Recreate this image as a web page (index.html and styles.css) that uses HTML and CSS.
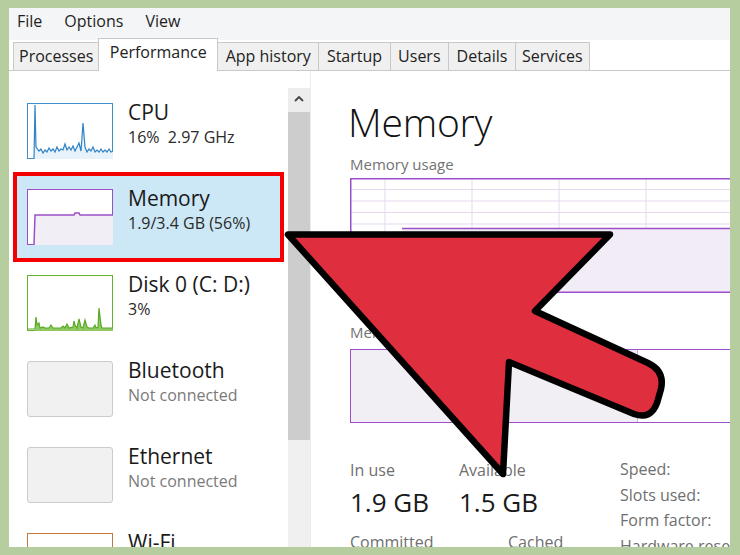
FILE: index.html
```html
<!DOCTYPE html>
<html>
<head>
<meta charset="utf-8">
<link rel="stylesheet" href="styles.css">
</head>
<body>
<div class="frame">
  <div class="menubar">
    <span class="menu-item">File</span>
    <span class="menu-item">Options</span>
    <span class="menu-item">View</span>
  </div>
  <div class="tabs">
    <div class="tab">Processes</div>
    <div class="tab active">Performance</div>
    <div class="tab">App history</div>
    <div class="tab">Startup</div>
    <div class="tab">Users</div>
    <div class="tab">Details</div>
    <div class="tab">Services</div>
  </div>
  <div class="main">
    <div class="sidebar">
      <div class="item">
        <div class="thumb thumb-cpu">
          <svg viewBox="0 0 86 56" width="86" height="56">
            <polygon class="fill-cpu" points="0,56 7,56 8,2 9,44 12,48 14,46 16,50 18,47 20,49 22,45 24,48 26,46 28,49 30,44 32,48 34,46 36,47 38,41 40,47 42,44 44,47 46,43 48,48 50,44 52,40 54,48 56,20 58,44 60,49 62,46 64,48 66,44 68,49 70,47 72,49 74,46 76,49 78,47 80,49 82,46 84,49 86,48 86,56"/>
            <polyline class="line-cpu" points="7,56 8,2 9,44 12,48 14,46 16,50 18,47 20,49 22,45 24,48 26,46 28,49 30,44 32,48 34,46 36,47 38,41 40,47 42,44 44,47 46,43 48,48 50,44 52,40 54,48 56,20 58,44 60,49 62,46 64,48 66,44 68,49 70,47 72,49 74,46 76,49 78,47 80,49 82,46 84,49 86,48"/>
          </svg>
        </div>
        <div class="info">
          <div class="name">CPU</div>
          <div class="sub">16%&nbsp; 2.97 GHz</div>
        </div>
      </div>
      <div class="item selected">
        <div class="thumb thumb-mem">
          <svg viewBox="0 0 86 56" width="86" height="56">
            <polygon class="fill-mem" points="7,56 8,26 47,26 48,24 52,24 53,26 86,26 86,56"/>
            <polyline class="line-mem" points="7,56 8,26 47,26 48,24 52,24 53,26 86,26"/>
          </svg>
        </div>
        <div class="info">
          <div class="name">Memory</div>
          <div class="sub">1.9/3.4 GB (56%)</div>
        </div>
      </div>
      <div class="item">
        <div class="thumb thumb-disk">
          <svg viewBox="0 0 86 56" width="86" height="56">
            <polygon class="fill-disk" points="0,56 8,56 9,42 10,50 12,48 13,53 16,52 18,53 22,53 24,50 26,53 34,53 36,51 38,53 40,49 42,53 46,52 47,46 48,50 50,53 52,44 54,52 56,53 58,45 60,52 62,53 66,53 68,50 69,53 71,52 72,33 74,50 75,53 86,53 86,56"/>
            <polyline class="line-disk" points="0,54 8,54 9,42 10,50 12,48 13,53 16,52 18,53 22,53 24,50 26,53 34,53 36,51 38,53 40,49 42,53 46,52 47,46 48,50 50,53 52,44 54,52 56,53 58,45 60,52 62,53 66,53 68,50 69,53 71,52 72,33 74,50 75,53 86,53"/>
          </svg>
        </div>
        <div class="info">
          <div class="name">Disk 0 (C: D:)</div>
          <div class="sub">3%</div>
        </div>
      </div>
      <div class="item">
        <div class="thumb thumb-off"></div>
        <div class="info">
          <div class="name">Bluetooth</div>
          <div class="sub muted">Not connected</div>
        </div>
      </div>
      <div class="item">
        <div class="thumb thumb-off"></div>
        <div class="info">
          <div class="name">Ethernet</div>
          <div class="sub muted">Not connected</div>
        </div>
      </div>
      <div class="item">
        <div class="thumb thumb-wifi"></div>
        <div class="info">
          <div class="name">Wi-Fi</div>
        </div>
      </div>
    </div>
    <div class="scrollbar">
      <div class="sb-button">
        <svg width="10" height="6" viewBox="0 0 10 6"><polyline points="1,5 5,1 9,5" fill="none" stroke="#444" stroke-width="1.8"/></svg>
      </div>
      <div class="sb-thumb"></div>
      <div class="sb-track"></div>
    </div>
    <div class="detail">
      <div class="title">Memory</div>
      <div class="label">Memory usage</div>
      <svg class="usage-graph" width="400" height="115" viewBox="0 0 400 115">
        <g class="grid">
          <line x1="0" y1="11.5" x2="400" y2="11.5"/>
          <line x1="0" y1="23" x2="400" y2="23"/>
          <line x1="0" y1="34.5" x2="400" y2="34.5"/>
          <line x1="0" y1="46" x2="400" y2="46"/>
          <line x1="0" y1="57.5" x2="400" y2="57.5"/>
          <line x1="0" y1="69" x2="400" y2="69"/>
          <line x1="0" y1="80.5" x2="400" y2="80.5"/>
          <line x1="0" y1="92" x2="400" y2="92"/>
          <line x1="0" y1="103.5" x2="400" y2="103.5"/>
          <line x1="35" y1="0" x2="35" y2="115"/>
          <line x1="122" y1="0" x2="122" y2="115"/>
          <line x1="209" y1="0" x2="209" y2="115"/>
          <line x1="296" y1="0" x2="296" y2="115"/>
          <line x1="383" y1="0" x2="383" y2="115"/>
        </g>
        <rect class="usage-fill" x="52" y="50.5" width="348" height="64"/>
        <line class="usage-line" x1="52" y1="50.5" x2="400" y2="50.5"/>
        <rect class="graph-border" x="0.75" y="0.75" width="420" height="113.5"/>
      </svg>
      <div class="label label-comp">Memory composition</div>
      <div class="composition">
        <div class="comp-used"></div>
      </div>
      <div class="stats">
        <div class="stats-left">
          <div class="stat-row">
            <div class="stat col-inuse">
              <div class="stat-label">In use</div>
              <div class="stat-value">1.9 GB</div>
            </div>
            <div class="stat">
              <div class="stat-label">Available</div>
              <div class="stat-value">1.5 GB</div>
            </div>
          </div>
          <div class="stat-row">
            <div class="stat col-committed">
              <div class="stat-label">Committed</div>
            </div>
            <div class="stat">
              <div class="stat-label">Cached</div>
            </div>
          </div>
        </div>
        <div class="stats-right">
          <div class="spec">Speed:</div>
          <div class="spec">Slots used:</div>
          <div class="spec">Form factor:</div>
          <div class="spec">Hardware reserved:</div>
        </div>
      </div>
    </div>
  </div>
  <svg class="arrow" width="721" height="539" viewBox="0 0 721 539">
    <g transform="translate(-9,-8)">
      <path d="M288 234.5 L610 234.5 L535 311 L648 363 Q665 371 661 389 L657 403 Q651 420 634 414 L509 362 L503 474 Z"/>
    </g>
  </svg>
</div>
</body>
</html>
```

FILE: styles.css
```css
html, body {
  margin: 0;
  padding: 0;
}
body {
  background: #b5cd9f;
  width: 740px;
  height: 555px;
  overflow: hidden;
  font-family: "Open Sans", "Noto Sans", sans-serif;
  color: #1e1e1e;
}
.frame {
  position: relative;
  width: 721px;
  height: 539px;
  margin: 8px 0 0 9px;
  background: #fff;
  overflow: hidden;
}

/* menu */
.menubar {
  height: 32px;
  background: #f4f5f7;
  display: flex;
  padding-left: 8px;
  box-sizing: border-box;
  font-size: 16px;
  line-height: 26px;
}
.menu-item {
  margin-right: 22px;
}

/* tabs */
.tabs {
  height: 31px;
  box-sizing: border-box;
  border-bottom: 1px solid #c9c9c9;
  display: flex;
  align-items: flex-end;
  padding-left: 4px;
  font-size: 16px;
  line-height: 26px;
}
.tab {
  height: 28px;
  box-sizing: border-box;
  border: 1px solid #c8c8c8;
  border-bottom: none;
  background: #f0f0f0;
  padding: 0 7.5px;
  margin-right: -1px;
  color: #222;
}
.tab:first-child {
  padding: 0 5px;
}
.tab:last-child {
  padding: 0 6px;
}
.tab.active {
  height: 33px;
  margin-bottom: -1px;
  background: #fff;
  padding: 0 10.5px;
  position: relative;
  z-index: 1;
}

/* main */
.main {
  display: flex;
  height: 476px;
}
.sidebar {
  width: 279px;
  padding-top: 15px;
  flex: none;
}
.item {
  position: relative;
  height: 86px;
  box-sizing: border-box;
  padding: 17px 0 0 18px;
  display: flex;
  align-items: flex-start;
  isolation: isolate;
}
.item.selected::before {
  content: "";
  position: absolute;
  left: 4px;
  right: 4px;
  top: 0;
  bottom: -4px;
  border: 4px solid #f40000;
  background: #cce7f5;
  z-index: -1;
}
.thumb {
  width: 86px;
  height: 56px;
  box-sizing: border-box;
  flex: none;
  position: relative;
}
.thumb svg {
  position: absolute;
  left: 0;
  top: 0;
}
.thumb-cpu {
  border: 1.5px solid #3f8fce;
  background: #fff;
}
.thumb-cpu svg, .thumb-mem svg, .thumb-disk svg {
  left: -1.5px;
  top: -1.5px;
}
.fill-cpu { fill: #e8f2fa; }
.line-cpu { fill: none; stroke: #2f83c6; stroke-width: 1.2; }
.thumb-mem {
  border: 1.5px solid #9c4fc8;
  background: #fff;
}
.fill-mem { fill: #f2eef6; }
.line-mem { fill: none; stroke: #9c4fc8; stroke-width: 1.5; }
.thumb-disk {
  border: 1.5px solid #63b22d;
  background: #fff;
}
.fill-disk { fill: #8fc964; }
.line-disk { fill: none; stroke: #5aa923; stroke-width: 1.2; }
.thumb-off {
  border: 1.5px solid #cbcbcb;
  border-radius: 3px;
  background: #f1f1f1;
}
.thumb-wifi {
  border: 1.5px solid #c5783a;
  background: #fff;
}
.info {
  margin-left: 15px;
  margin-top: -4px;
}
.name {
  font-size: 21px;
  line-height: 26px;
  color: #1a1a1a;
}
.sub {
  font-size: 16px;
  line-height: 20px;
  margin-top: 2px;
  color: #2a2a2a;
}
.sub.muted {
  color: #7a7a7a;
}

/* scrollbar */
.scrollbar {
  width: 22px;
  flex: none;
  padding-top: 17px;
  display: flex;
  flex-direction: column;
  border-right: 1px solid #ececec;
}
.sb-button {
  height: 24px;
  background: #ededed;
  display: flex;
  justify-content: center;
  padding-top: 8px;
  box-sizing: border-box;
}
.sb-thumb {
  height: 328px;
  background: #cdcdcd;
}
.sb-track {
  flex: 1;
  background: #f0f0f0;
}

/* detail */
.detail {
  flex: 1;
  padding: 29px 0 0 39px;
  min-width: 0;
}
.title {
  font-size: 39px;
  font-weight: 300;
  line-height: 44px;
  letter-spacing: -0.2px;
  margin-left: -2px;
  color: #111;
}
.label {
  font-size: 15px;
  line-height: 20px;
  color: #737373;
  margin-top: 10px;
}
.usage-graph {
  display: block;
  margin-top: 4px;
}
.grid line {
  stroke: #e6d9ef;
  stroke-width: 1;
}
.usage-fill { fill: #f1ecf6; }
.usage-line { stroke: #9c4fc8; stroke-width: 1.5; }
.graph-border {
  fill: none;
  stroke: #9c4fc8;
  stroke-width: 1.5;
}
.label-comp {
  margin-top: 29px;
}
.composition {
  margin-top: 7px;
  width: 420px;
  height: 74px;
  box-sizing: border-box;
  border: 1.5px solid #9c4fc8;
  display: flex;
}
.comp-used {
  width: 286px;
  background: #f1eef4;
  border-right: 1px solid #c9b3dc;
}

/* stats */
.stats {
  display: flex;
  margin-top: 34px;
}
.stats-left {
  width: 270px;
  flex: none;
}
.stat-row {
  display: flex;
}
.stat-row + .stat-row {
  margin-top: 11px;
}
.col-inuse { width: 109px; }
.col-committed { width: 158px; }
.stat-label {
  font-size: 16px;
  line-height: 20px;
  color: #6f6f6f;
  margin-top: 3px;
}
.stat-value {
  font-size: 26px;
  line-height: 32px;
  margin-top: 6px;
  color: #1a1a1a;
}
.spec {
  font-size: 16px;
  line-height: 25.5px;
  color: #6f6f6f;
  white-space: nowrap;
}

/* overlay arrow */
.arrow {
  position: absolute;
  left: 0;
  top: 0;
  pointer-events: none;
}
.arrow path {
  fill: #df2f3e;
  stroke: #000;
  stroke-width: 6.5;
  stroke-linejoin: round;
}
```
